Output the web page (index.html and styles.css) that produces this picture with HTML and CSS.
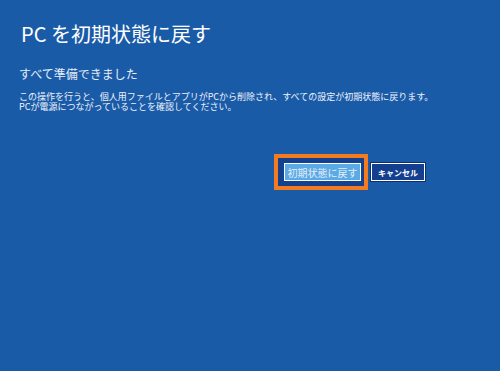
FILE: index.html
```html
<!DOCTYPE html>
<html lang="ja">
<head>
<meta charset="utf-8">
<link rel="stylesheet" href="styles.css">
</head>
<body>
<div class="page">
  <h1 class="title">PC を初期状態に戻す</h1>
  <p class="subtitle">すべて準備できました</p>
  <div class="body">
    <p class="line">この操作を行うと、個人用ファイルとアプリがPCから削除され、すべての設定が初期状態に戻ります。</p>
    <p class="line">PCが電源につながっていることを確認してください。</p>
  </div>
  <div class="actions">
    <div class="focus">
      <button class="btn primary">初期状態に戻す</button>
    </div>
    <button class="btn cancel">キャンセル</button>
  </div>
</div>
</body>
</html>
```
FILE: styles.css
```css
html, body {
  margin: 0;
  padding: 0;
  width: 500px;
  height: 371px;
  background: #1a5ba8;
  overflow: hidden;
}
.page {
  padding: 22px 0 0 19px;
  font-family: "Noto Sans CJK JP", "Noto Sans", sans-serif;
  color: #ffffff;
}
.title {
  margin: 0 0 0 2px;
  font-size: 20px;
  line-height: 24px;
  font-weight: 400;
}
.subtitle {
  margin: 20px 0 0 0;
  font-size: 12px;
  line-height: 16px;
  color: #e8eef8;
}
.body {
  margin: 10px 0 0 0;
  display: flex;
  flex-direction: column;
  font-size: 9px;
  line-height: 10px;
  color: #eef2fa;
}
.line {
  margin: 0;
  height: 10px;
}
.actions {
  display: flex;
  align-items: center;
  gap: 3px;
  margin: 42px 0 0 255px;
}
.focus {
  border: 4px solid #f47b20;
  background: #12428f;
  padding: 5px 3px 5px 6px;
  display: flex;
}
.btn {
  font-family: "Noto Sans CJK JP", "Noto Sans", sans-serif;
  margin: 0;
  height: 18px;
  padding: 0;
  border: 1px solid #ffffff;
  display: flex;
  align-items: center;
  justify-content: center;
}
.primary {
  width: 77px;
  background: #5aaae6;
  color: #e6eef6;
  font-size: 10px;
}
.cancel {
  width: 54px;
  background: #143f8f;
  color: #ffffff;
  font-size: 8px;
  font-weight: 700;
  box-shadow: 0 0 0 1px #0d2f70;
}
```
